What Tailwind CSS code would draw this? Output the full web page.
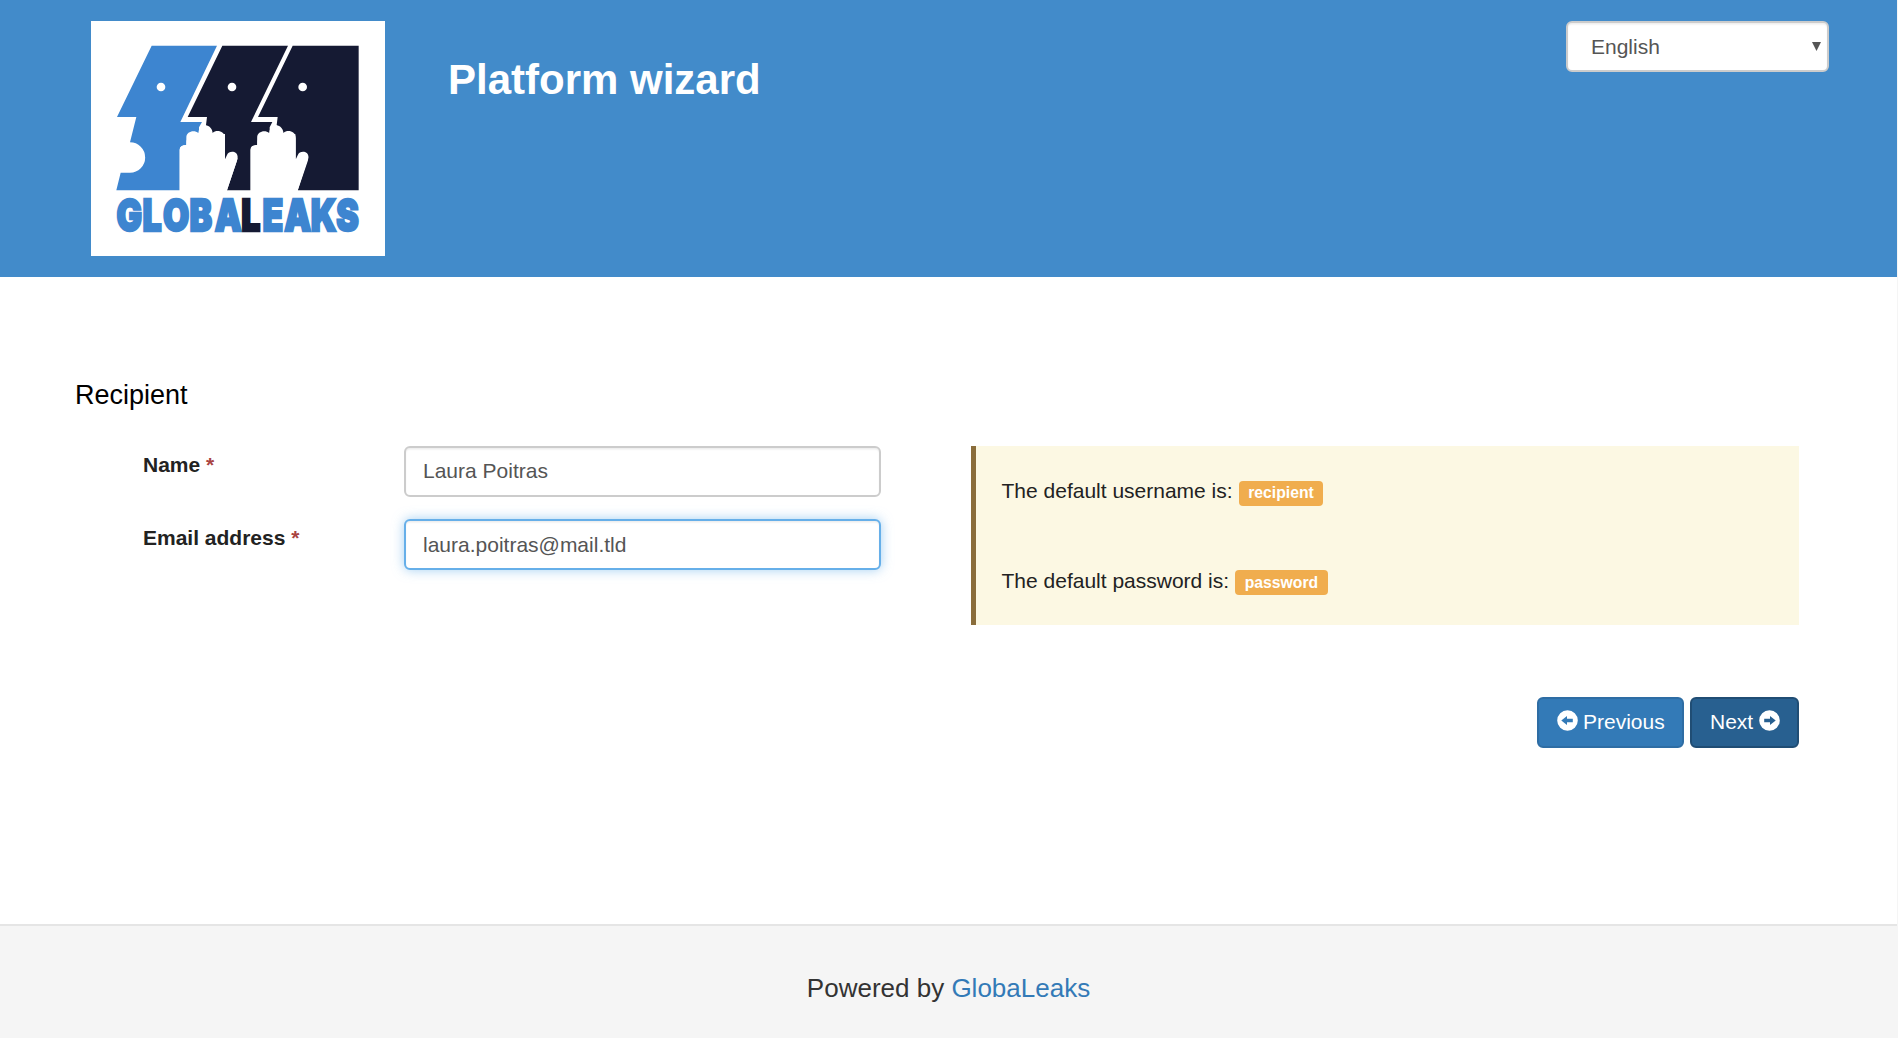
<!DOCTYPE html>
<html lang="en">
<head>
<meta charset="utf-8">
<title>Platform wizard</title>
<script src="https://cdn.jsdelivr.net/npm/@tailwindcss/browser@4"></script>
</head>
<body class="h-[1038px] overflow-hidden bg-[#f5f5f5] font-['Liberation_Sans',Arial,sans-serif] text-[21px] leading-[30px] text-[#222]">
<div class="flex h-[1038px] w-[1897px] flex-col bg-white">
  <header class="flex h-[277px] shrink-0 items-start bg-[#428bca] pt-[21px] pr-[68px] pl-[91px]">
    <svg class="h-[235px] w-[294px] shrink-0 bg-white" viewBox="33 33 882 705" preserveAspectRatio="none" role="img" aria-label="GlobaLeaks">
      <path fill="#3d85d0" d="M215 107H411L301 336H366L357 352V372H335Q319 375 319 405Q299 407 299 420V541H109L122 488H150A45 45 0 0 0 150 397L169 321H111Z"/>
      <path fill="#151a33" d="M427 107H624L513 336H577L569 352V372H548Q532 375 532 405Q512 407 512 420V541H441L473 445L435 448V372H378V345L381 321H323Z"/>
      <path fill="#151a33" d="M638 107H836V541H653L684 445L646 448V372H590V345L593 321H534Z"/>
      <g fill="#fff">
        <circle cx="243" cy="231" r="13"/><circle cx="456" cy="231" r="13"/><circle cx="668" cy="231" r="13"/>
        <path id="hand" d="M299 545V419Q299 405 319 405V383C319 364 343 359 355 369C356 357 362 352 366 346C378 343 396 349 398 369C409 358 435 363 435 385V448L441 435C446 421 473 421 473 442L471 452L441 541V545Z"/>
        <use href="#hand" x="212.500"/>
      </g>
      <g transform="translate(0 664) scale(.78 1)" font-family="Inter, sans-serif" font-weight="900" font-size="130" stroke-width="7" fill="#3d85d0" stroke="#3d85d0">
        <text x="140 240 319 421 518 620 702 786 888 986">GLOBA<tspan fill="#151a33" stroke="#151a33">L</tspan>EAKS</text>
      </g>
    </svg>
    <h1 class="mt-[29px] ml-[63px] text-[42px] leading-[60px] font-bold text-white">Platform wizard</h1>
    <div class="ml-auto flex h-[51px] w-[263px] items-center justify-between rounded-[6px] border-2 border-[#ccc] bg-white pr-[6px] pl-[23px] text-[#555] shadow-[inset_0_1.5px_1.5px_rgba(0,0,0,0.075)]">
      <span>English</span>
      <svg class="h-[9px] w-[9px]" viewBox="0 0 9 9"><path fill="#555" d="M0 0H9L4.500 9Z"/></svg>
    </div>
  </header>

  <main class="h-[647px] shrink-0 pt-[99px] pl-[75px]">
    <h2 class="text-[27px] leading-[39px] text-black">Recipient</h2>
    <div class="mt-[31px] flex pl-[68px]">
      <form class="grid w-[738px] grid-cols-[261px_477px] content-start gap-y-[22px]">
        <label class="pt-[4px] font-bold">Name <span class="text-[#a94442]">*</span></label>
        <div class="flex h-[51px] items-center rounded-[6px] border-2 border-[#ccc] bg-white px-[17px] pb-[2px] text-[#555] shadow-[inset_0_1.5px_1.5px_rgba(0,0,0,0.075)]">Laura Poitras</div>
        <label class="pt-[4px] font-bold">Email address <span class="text-[#a94442]">*</span></label>
        <div class="flex h-[51px] items-center rounded-[6px] border-2 border-[#66afe9] bg-white px-[17px] text-[#555] shadow-[inset_0_1.5px_1.5px_rgba(0,0,0,0.075),0_0_12px_rgba(102,175,233,0.6)]">laura.poitras@mail.tld</div>
      </form>
      <aside class="ml-[90px] h-[179px] w-[828px] border-l-[5px] border-[#8a6d3b] bg-[#fcf8e3] pt-[30px] pl-[25.5px]">
        <p class="flex items-start">The default username is:<span class="ml-[6px] mt-[5px] h-[25px] rounded-[4px] bg-[#f0ad4e] px-[9.5px] text-[15.75px] leading-[23px] font-bold text-white">recipient</span></p>
        <p class="mt-[60px] flex items-start">The default password is:<span class="ml-[6px] mt-[4px] h-[25px] rounded-[4px] bg-[#f0ad4e] px-[9.5px] text-[15.75px] leading-[25px] font-bold text-white">password</span></p>
      </aside>
    </div>
    <div class="mt-[72px] mr-[98px] flex justify-end gap-[6px] text-white">
      <button class="flex h-[51px] w-[147px] items-center gap-[5.5px] rounded-[6px] border-2 border-[#2e6da4] bg-[#337ab7] pb-[2px] pl-[17.5px]">
        <svg class="-mt-0.5 h-[21px] w-[21px] shrink-0" viewBox="0 0 21 21"><path fill="#fff" fill-rule="evenodd" d="M10.500 0.200A10.300 10.300 0 1 1 10.500 20.800A10.300 10.300 0 0 1 10.500 0.200ZM4.300 10.500L10 15V12.200H15.800V8.800H10V6Z"/></svg>
        <span>Previous</span>
      </button>
      <button class="flex h-[51px] w-[109px] items-center gap-[6px] rounded-[6px] border-2 border-[#204d74] bg-[#286090] pb-[2px] pl-[18px]">
        <span>Next</span>
        <svg class="-mt-0.5 h-[21px] w-[21px] shrink-0" viewBox="0 0 21 21"><path fill="#fff" fill-rule="evenodd" d="M10.500 0.200A10.300 10.300 0 1 1 10.500 20.800A10.300 10.300 0 0 1 10.500 0.200ZM16.700 10.500L11 15V12.200H5.200V8.800H11V6Z"/></svg>
      </button>
    </div>
  </main>

  <footer class="flex-1 border-t-2 border-[#e5e5e5] bg-[#f5f5f5] pt-[44px] text-center text-[26px] leading-[37px] text-[#333]">Powered by <a class="text-[#337ab7]">GlobaLeaks</a></footer>
</div>
</body>
</html>
